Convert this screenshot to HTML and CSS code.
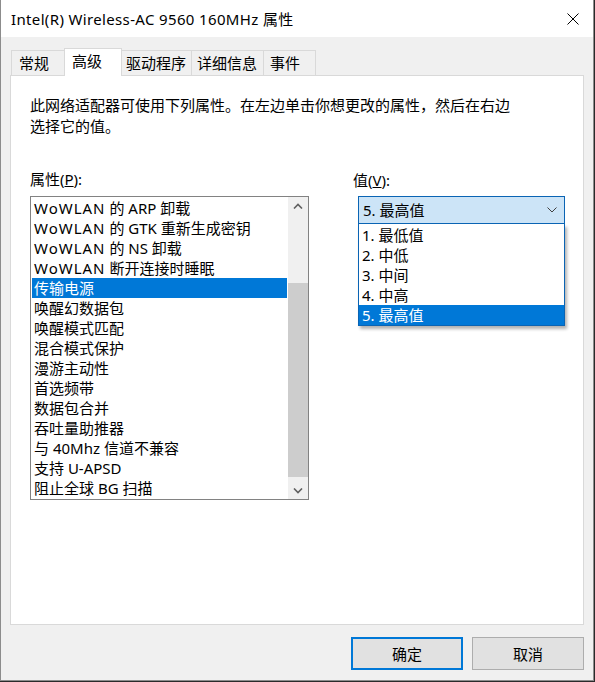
FILE: index.html
```html
<!DOCTYPE html>
<html lang="zh-CN">
<head>
<meta charset="utf-8">
<title>属性</title>
<link rel="stylesheet" href="styles.css">
</head>
<body>
<div class="window">
  <div class="titlebar">
    <span class="title">Intel(R) Wireless-AC 9560 160MHz 属性</span>
    <svg class="close" width="12" height="12" viewBox="0 0 12 12"><path d="M0.5 0.5L11.5 11.5M11.5 0.5L0.5 11.5" stroke="#000" stroke-width="1" fill="none"/></svg>
  </div>
  <div class="content">
    <div class="tabs">
      <div class="tab t1">常规</div>
      <div class="tab t2 active">高级</div>
      <div class="tab t3">驱动程序</div>
      <div class="tab t4">详细信息</div>
      <div class="tab t5">事件</div>
    </div>
    <div class="panel">
      <p class="desc">此网络适配器可使用下列属性。在左边单击你想更改的属性，然后在右边<br>选择它的值。</p>
      <div class="cols">
        <div class="col-left">
          <div class="label">属性(<u>P</u>):</div>
          <div class="listbox">
            <div class="items">
              <div class="item"><span class="w">WoWLAN</span> 的 ARP 卸载</div>
              <div class="item"><span class="w">WoWLAN</span> 的 GTK 重新生成密钥</div>
              <div class="item"><span class="w">WoWLAN</span> 的 NS 卸载</div>
              <div class="item"><span class="w">WoWLAN</span> 断开连接时睡眠</div>
              <div class="item selected">传输电源</div>
              <div class="item">唤醒幻数据包</div>
              <div class="item">唤醒模式匹配</div>
              <div class="item">混合模式保护</div>
              <div class="item">漫游主动性</div>
              <div class="item">首选频带</div>
              <div class="item">数据包合并</div>
              <div class="item">吞吐量助推器</div>
              <div class="item">与 40Mhz 信道不兼容</div>
              <div class="item">支持 U-APSD</div>
              <div class="item">阻止全球 BG 扫描</div>
            </div>
            <div class="scrollbar">
              <div class="sb-btn"><svg width="10" height="6" viewBox="0 0 10 6"><path d="M1 5.5L5 1.5L9 5.5" stroke="#606060" stroke-width="1.6" fill="none"/></svg></div>
              <div class="sb-thumb"></div>
              <div class="sb-spacer"></div>
              <div class="sb-btn"><svg width="10" height="6" viewBox="0 0 10 6"><path d="M1 0.5L5 4.5L9 0.5" stroke="#606060" stroke-width="1.6" fill="none"/></svg></div>
            </div>
          </div>
        </div>
        <div class="col-right">
          <div class="label label-v">值(<u>V</u>):</div>
          <div class="combo-wrap">
            <div class="combo">
              <span>5. 最高值</span>
              <svg class="chev" width="10" height="6" viewBox="0 0 10 6"><path d="M0.5 0.5L5 5L9.5 0.5" stroke="#404040" stroke-width="1" fill="none"/></svg>
            </div>
            <div class="dropdown">
              <div class="opt">1. 最低值</div>
              <div class="opt">2. 中低</div>
              <div class="opt">3. 中间</div>
              <div class="opt">4. 中高</div>
              <div class="opt selected">5. 最高值</div>
            </div>
          </div>
        </div>
      </div>
    </div>
    <div class="buttons">
      <div class="btn default">确定</div>
      <div class="btn">取消</div>
    </div>
  </div>
</div>
</body>
</html>
```
FILE: styles.css
```css
html, body {
  margin: 0;
  padding: 0;
  background: #2a2a2a;
}
body {
  font-family: "Noto Sans", "Noto Sans CJK SC", sans-serif;
  font-size: 15px;
  color: #000;
}
.window {
  width: 594px;
  height: 681px;
  box-sizing: border-box;
  border: 1px solid #8c8c8c;
  border-top: none;
  background: #f0f0f0;
  display: flex;
  flex-direction: column;
}
.titlebar {
  height: 37px;
  flex: none;
  background: #fff;
  display: flex;
  align-items: center;
  padding-left: 10px;
  padding-right: 14px;
}
.title {
  flex: 1;
  font-size: 15px;
  line-height: 20px;
  padding-top: 1px;
  letter-spacing: 0.35px;
}
.close {
  display: block;
  margin-top: 1px;
}
.content {
  padding: 11px 9px 0 9px;
  display: flex;
  flex-direction: column;
}
.tabs {
  height: 27px;
  display: flex;
  align-items: flex-end;
  padding-left: 1px;
}
.tab {
  box-sizing: border-box;
  height: 25px;
  border: 1px solid #d9d9d9;
  border-bottom: none;
  background: #f0f0f0;
  line-height: 24px;
  padding-left: 6px;
  margin-right: -1px;
  white-space: nowrap;
}
.t1 { width: 55px; margin-right: -2px; padding-left: 7px; }
.t2 { width: 58px; }
.t3 { width: 71px; padding-left: 4px; }
.t4 { width: 73px; padding-left: 5px; }
.t5 { width: 53px; }
.tab.active {
  height: 28px;
  margin-bottom: -1px;
  background: #fff;
  position: relative;
  z-index: 1;
  padding-left: 7px;
  line-height: 25px;
}
.panel {
  box-sizing: border-box;
  height: 550px;
  border: 1px solid #d9d9d9;
  background: #fff;
  padding: 19px 19px 0 19px;
}
.desc {
  margin: 0;
  line-height: 21px;
}
.cols {
  display: grid;
  grid-template-columns: 279px 1fr;
  column-gap: 44px;
  margin-top: 32px;
}
.label {
  line-height: 20px;
  height: 20px;
  margin-bottom: 7px;
}
.label-v { padding-top: 1px; height: 19px; }
.listbox {
  box-sizing: border-box;
  height: 304px;
  border: 1px solid #828282;
  display: flex;
}
.items {
  flex: 1;
  padding: 1px;
}
.item {
  height: 20px;
  line-height: 20px;
  padding-left: 2px;
  white-space: nowrap;
}
.w { letter-spacing: 1px; }
.item.selected {
  background: #0078d7;
  color: #fff;
}
.scrollbar {
  width: 20px;
  background: #f0f0f0;
  display: flex;
  flex-direction: column;
}
.sb-btn {
  height: 17px;
  display: flex;
  align-items: center;
  justify-content: center;
}
.sb-btn svg { display: block; }
.sb-thumb {
  margin-top: 69px;
  height: 194px;
  background: #cdcdcd;
}
.sb-spacer { flex: 1; }
.combo-wrap {
  position: relative;
  margin-left: 5px;
  width: 207px;
}
.combo {
  box-sizing: border-box;
  height: 28px;
  border: 1px solid #0a64b4;
  background: #cce4f7;
  display: flex;
  align-items: center;
  padding-left: 4px;
  padding-right: 7px;
}
.combo span {
  flex: 1;
  line-height: 20px;
}
.chev { display: block; }
.dropdown {
  position: absolute;
  left: 0;
  top: 28px;
  width: 207px;
  box-sizing: border-box;
  background: #fff;
  border: 1px solid #0a64b4;
  border-top: none;
  padding-top: 1px;
  box-shadow: 2px 3px 3px rgba(0, 0, 0, 0.3);
}
.opt {
  height: 20px;
  line-height: 20px;
  padding-left: 3px;
}
.opt.selected {
  background: #0078d7;
  color: #fff;
}
.buttons {
  display: flex;
  justify-content: flex-end;
  gap: 9px;
  margin-top: 12px;
  padding-right: 0px;
}
.btn {
  box-sizing: border-box;
  width: 112px;
  height: 33px;
  border: 1px solid #adadad;
  background: #e1e1e1;
  display: flex;
  align-items: center;
  justify-content: center;
  line-height: 20px;
}
.btn.default {
  border: 2px solid #0078d7;
}
```
